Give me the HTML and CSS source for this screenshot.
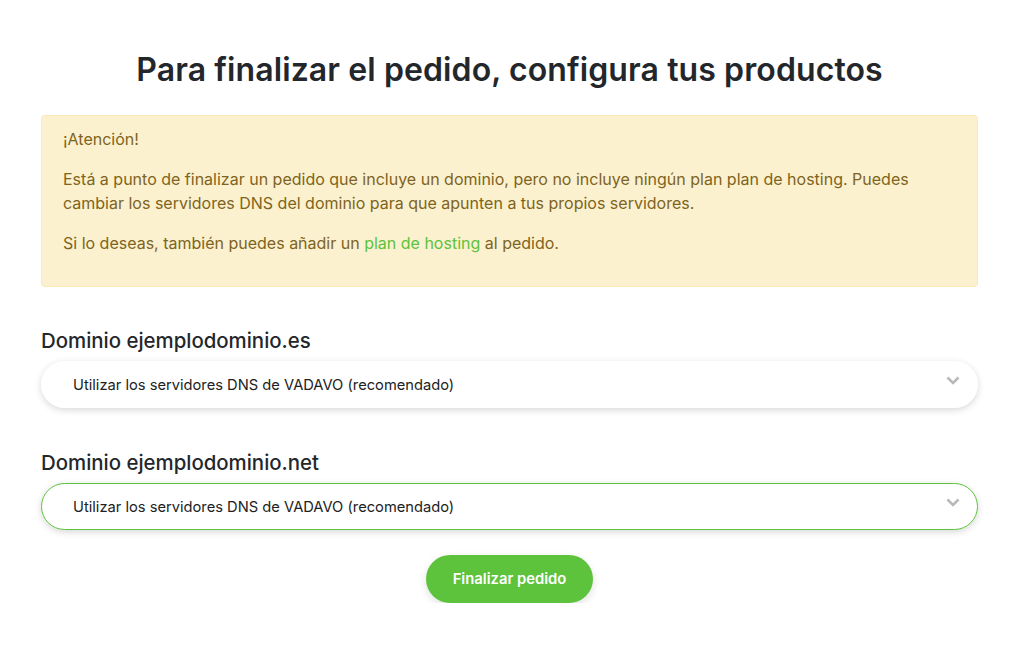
FILE: index.html
```html
<!DOCTYPE html>
<html lang="es">
<head>
  <meta charset="UTF-8" />
  <meta name="viewport" content="width=device-width, initial-scale=1.0"/>
  <title>Configura tus productos</title>
  <link rel="stylesheet" href="styles.css">
</head>
<body>
  <div class="page">
    <h1>Para finalizar el pedido, configura tus productos</h1>

    <div class="alert">
      <p>¡Atención!</p>
      <p>Está a punto de finalizar un pedido que incluye un dominio, pero no incluye ningún plan plan de hosting. Puedes cambiar los servidores DNS del dominio para que apunten a tus propios servidores.</p>
      <p>Si lo deseas, también puedes añadir un <a href="#">plan de hosting</a> al pedido.</p>
    </div>

    <div class="domain">
      <h3>Dominio ejemplodominio.es</h3>
      <div class="select">
        <span>Utilizar los servidores DNS de VADAVO (recomendado)</span>
        <svg class="chevron" width="14" height="9" viewBox="0 0 14 9"><path d="M1.5 1.5 L7 7 L12.5 1.5" fill="none" stroke="#b9b9b9" stroke-width="2.6"/></svg>
      </div>
    </div>

    <div class="domain">
      <h3>Dominio ejemplodominio.net</h3>
      <div class="select active">
        <span>Utilizar los servidores DNS de VADAVO (recomendado)</span>
        <svg class="chevron" width="14" height="9" viewBox="0 0 14 9"><path d="M1.5 1.5 L7 7 L12.5 1.5" fill="none" stroke="#b9b9b9" stroke-width="2.6"/></svg>
      </div>
    </div>

    <div class="actions">
      <button>Finalizar pedido</button>
    </div>
  </div>
</body>
</html>
```

FILE: styles.css
```css
body {
  margin: 0;
  font-family: "Inter", "Noto Sans", sans-serif;
  background: #fff;
  color: #212529;
}
.page {
  padding: 0 46px 0 41px;
}
h1 {
  margin: 0;
  padding-top: 50px;
  font-size: 32px;
  font-weight: 600;
  text-align: center;
  color: #23272b;
  letter-spacing: 0.1px;
}
.alert {
  margin-top: 26px;
  padding: 11px 21px 15px;
  background: #fcf1cf;
  border: 1px solid #f9e9b8;
  border-radius: 4px;
  color: #7e6421;
  font-size: 16px;
  line-height: 24px;
}
.alert p {
  margin: 0 0 16px;
}
.alert a {
  color: #5dc23c;
  text-decoration: none;
}
.domain {
  margin-top: 41px;
}
.domain + .domain {
  margin-top: 42px;
}
.domain h3 {
  margin: 0 0 8px;
  font-size: 20.4px;
  font-weight: 500;
  color: #23272b;
}
.select {
  box-sizing: border-box;
  display: flex;
  align-items: center;
  justify-content: space-between;
  height: 47px;
  padding: 0 17px 0 31px;
  border: 1px solid #fff;
  border-radius: 24px;
  box-shadow: 0 2px 7px rgba(0, 0, 0, 0.16);
  font-size: 14.7px;
  color: #222;
}
.select.active {
  border-color: #5dc23c;
}
.chevron {
  margin-top: -8px;
}
.actions {
  display: flex;
  justify-content: center;
  margin-top: 25px;
}
button {
  width: 167px;
  height: 48px;
  border: none;
  border-radius: 24px;
  background: #5dc23c;
  color: #fff;
  font-family: inherit;
  font-size: 14.8px;
  font-weight: 600;
  box-shadow: 0 3px 8px rgba(0, 0, 0, 0.12);
  cursor: pointer;
}
```
